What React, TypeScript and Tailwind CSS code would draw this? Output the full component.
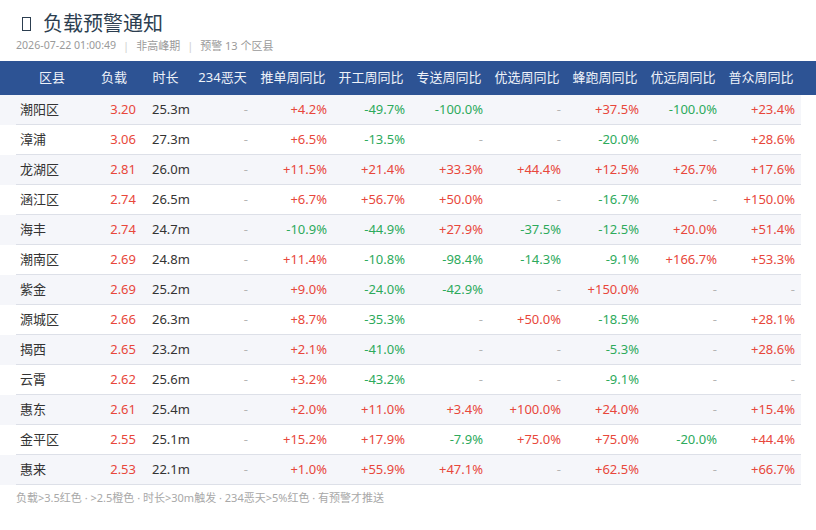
const rows: [string, string, string, string, string[]][] = [
  ["潮阳区", "3.20", "25.3m", "-", ["+4.2%", "-49.7%", "-100.0%", "-", "+37.5%", "-100.0%", "+23.4%"]],
  ["漳浦", "3.06", "27.3m", "-", ["+6.5%", "-13.5%", "-", "-", "-20.0%", "-", "+28.6%"]],
  ["龙湖区", "2.81", "26.0m", "-", ["+11.5%", "+21.4%", "+33.3%", "+44.4%", "+12.5%", "+26.7%", "+17.6%"]],
  ["涵江区", "2.74", "26.5m", "-", ["+6.7%", "+56.7%", "+50.0%", "-", "-16.7%", "-", "+150.0%"]],
  ["海丰", "2.74", "24.7m", "-", ["-10.9%", "-44.9%", "+27.9%", "-37.5%", "-12.5%", "+20.0%", "+51.4%"]],
  ["潮南区", "2.69", "24.8m", "-", ["+11.4%", "-10.8%", "-98.4%", "-14.3%", "-9.1%", "+166.7%", "+53.3%"]],
  ["紫金", "2.69", "25.2m", "-", ["+9.0%", "-24.0%", "-42.9%", "-", "+150.0%", "-", "-"]],
  ["源城区", "2.66", "26.3m", "-", ["+8.7%", "-35.3%", "-", "+50.0%", "-18.5%", "-", "+28.1%"]],
  ["揭西", "2.65", "23.2m", "-", ["+2.1%", "-41.0%", "-", "-", "-5.3%", "-", "+28.6%"]],
  ["云霄", "2.62", "25.6m", "-", ["+3.2%", "-43.2%", "-", "-", "-9.1%", "-", "-"]],
  ["惠东", "2.61", "25.4m", "-", ["+2.0%", "+11.0%", "+3.4%", "+100.0%", "+24.0%", "-", "+15.4%"]],
  ["金平区", "2.55", "25.1m", "-", ["+15.2%", "+17.9%", "-7.9%", "+75.0%", "+75.0%", "-20.0%", "+44.4%"]],
  ["惠来", "2.53", "22.1m", "-", ["+1.0%", "+55.9%", "+47.1%", "-", "+62.5%", "-", "+66.7%"]],
];

const headers = ["区县", "负载", "时长", "234恶天", "推单周同比", "开工周同比", "专送周同比", "优选周同比", "蜂跑周同比", "优远周同比", "普众周同比"];

const cols = "grid grid-cols-[72px_52px_51px_63px_78px_78px_78px_78px_78px_78px_78px]";

function pctColor(v: string) {
  if (v === "-") return "text-[#b4b4b4]";
  return v.startsWith("+") ? "text-[#e8473b]" : "text-[#2daa5c]";
}

export default function App() {
  return (
    <div
      className="w-[816px] h-[530px] bg-white text-[13px] text-[#333]"
      style={{ fontFamily: '"Noto Sans", "Noto Sans CJK SC", sans-serif' }}
    >
      <div className="px-4 pt-[10px] pb-[7px]">
        <div className="flex items-center h-[28px] text-[20px] text-[#2c3e50]">
          <span className="ml-[6px] mr-[12px] inline-block w-[9px] h-[14px] border-[1.5px] border-[#2c3e50]" />
          <span>负载预警通知</span>
        </div>
        <div className="flex items-center h-[16px] text-[11px] text-[#9a9a9a]">
          <span className="text-[10.6px]">2026-07-22 01:00:49</span>
          <span className="mx-[7px] text-[#cfcfcf]">|</span>
          <span>非高峰期</span>
          <span className="mx-[7px] text-[#cfcfcf]">|</span>
          <span>预警 13 个区县</span>
        </div>
      </div>

      <div className="w-full h-[34px] bg-[#2d5394] pl-4 text-[#eef2f9]">
        <div className={`${cols} h-full items-center`}>
          {headers.map((h) => (
            <div key={h} className="text-center whitespace-nowrap">
              {h}
            </div>
          ))}
        </div>
      </div>

      {rows.map(([name, load, dur, bad, pcts], i) => (
        <div key={name} className={`w-[801px] pl-4 ${i % 2 === 0 ? "bg-[#f5f6fa]" : "bg-white"}`}>
          <div className={`${cols} h-[30px] items-center border-b border-[#dde0e8]`}>
            <div className="pl-1">{name}</div>
            <div className="text-right pr-1 text-[#e8473b]">{load}</div>
            <div className="pl-3">{dur}</div>
            <div className="text-right pr-[6px] text-[#b4b4b4]">{bad}</div>
            {pcts.map((p, j) => (
              <div key={j} className={`text-right pr-[5px] ${pctColor(p)}`}>
                {p}
              </div>
            ))}
          </div>
        </div>
      ))}

      <div className="px-4 pt-[5px] text-[11px] text-[#a8a8a8]">
        负载&gt;3.5红色 · &gt;2.5橙色 · 时长&gt;30m触发 · 234恶天&gt;5%红色 · 有预警才推送
      </div>
    </div>
  );
}
